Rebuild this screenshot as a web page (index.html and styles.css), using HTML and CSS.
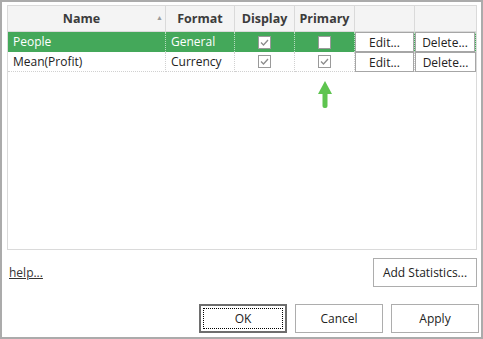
FILE: index.html
```html
<html>
    <head>
        <meta name="viewport" content="width=device-width, initial-scale=1"/>
    <title>Statistics</title>
    <link rel="stylesheet" href="styles.css">
    </head>
    <body>
        <div class="dialog">
        <div class="grid">
            <div class="head">
                <div class="hcell sorted">Name<span class="sort">&#9650;</span></div>
                <div class="hcell">Format</div>
                <div class="hcell">Display</div>
                <div class="hcell">Primary</div>
                <div class="hcell"></div>
                <div class="hcell last"></div>
            </div>
            <div class="row selected">
                <div class="cell">People</div>
                <div class="cell">General</div>
                <div class="cell mid"><span class="check on"><svg width="11" height="11" viewBox="0 0 11 11"><polyline points="2,5.5 4.5,8 9,3" fill="none" stroke="#8c8c8c" stroke-width="1.3"/></svg></span></div>
                <div class="cell mid"><span class="check"></span></div>
                <div class="cell btncell"><button class="mini">Edit...</button></div>
                <div class="cell btncell last"><button class="mini">Delete...</button></div>
            </div>
            <div class="row">
                <div class="cell">Mean(Profit)</div>
                <div class="cell">Currency</div>
                <div class="cell mid"><span class="check on"><svg width="11" height="11" viewBox="0 0 11 11"><polyline points="2,5.5 4.5,8 9,3" fill="none" stroke="#8c8c8c" stroke-width="1.3"/></svg></span></div>
                <div class="cell mid"><span class="check on"><svg width="11" height="11" viewBox="0 0 11 11"><polyline points="2,5.5 4.5,8 9,3" fill="none" stroke="#8c8c8c" stroke-width="1.3"/></svg></span></div>
                <div class="cell btncell"><button class="mini">Edit...</button></div>
                <div class="cell btncell last"><button class="mini">Delete...</button></div>
            </div>
            <svg class="arrow" width="16" height="28" viewBox="0 0 16 28">
                <polygon points="8,0 15,13 1,13" fill="#5ec44f"/>
                <rect x="5.5" y="11" width="5" height="16" rx="2" fill="#5ec44f"/>
            </svg>
        </div>
        <div class="tools">
            <a class="help" href="#">help...</a>
            <button class="btn stats">Add Statistics...</button>
        </div>
        <div class="actions">
            <button class="btn default">OK</button>
            <button class="btn">Cancel</button>
            <button class="btn">Apply</button>
        </div>
        </div>
    </body>
</html>
```
FILE: styles.css
```css
body{
    margin:0;
    width:483px;
    height:339px;
    box-sizing:border-box;
    border:2px solid #ababab;
    background:#fff;
    font-family:"Open Sans", "Liberation Sans", sans-serif;
    font-size:12px;
    color:#222;
    overflow:hidden;
}
.dialog{
    padding:3px 2px 0 5px;
}
.grid{
    position:relative;
    width:468px;
    height:243px;
    border:1px solid #dadada;
}
.head, .row{
    display:grid;
    grid-template-columns:158px 69px 60px 60px 60px 1fr;
}
.hcell{
    position:relative;
    height:25px;
    line-height:25px;
    background:#f4f4f4;
    border-right:1px solid #dadada;
    border-bottom:1px solid #dadada;
    text-align:center;
    font-weight:bold;
    font-size:12.5px;
    color:#3c3c3c;
}
.hcell.sorted{
    padding-right:10px;
}
.hcell.last{
    border-right:none;
}
.sort{
    position:absolute;
    right:2px;
    top:-1px;
    font-size:7px;
    color:#9a9a9a;
    font-weight:normal;
}
.cell{
    height:20px;
    line-height:19px;
    padding-left:5px;
    box-sizing:border-box;
    border-right:1px dotted #d0d0d0;
    border-bottom:1px dotted #d0d0d0;
    white-space:nowrap;
}
.cell.last{
    border-right:none;
}
.selected .cell{
    background:#44a85a;
    color:#fff;
    border-right:1px dotted #b9dcc0;
    border-bottom:none;
}
.selected .cell.last{
    border-right:1px dotted #b9dcc0;
}
.mid{
    padding-left:0;
    display:flex;
    align-items:center;
    justify-content:center;
}
.check{
    display:block;
    width:11px;
    height:11px;
    border:1px solid #9a9a9a;
    background:#fff;
}
.check svg{
    display:block;
}
.btncell{
    padding:0;
}
.mini{
    display:block;
    width:100%;
    height:20px;
    margin:0;
    padding:0;
    border:1px solid #a6a6a6;
    background:#fff;
    font-family:inherit;
    font-size:12px;
    color:#222;
}
.arrow{
    position:absolute;
    left:309px;
    top:75px;
}
.tools{
    display:flex;
    justify-content:space-between;
    align-items:center;
    margin-top:8px;
    width:470px;
}
.help{
    margin-left:2px;
    color:#333;
    text-decoration:underline;
}
.btn{
    width:88px;
    height:29px;
    margin:0;
    border:1px solid #adadad;
    background:#fff;
    font-family:inherit;
    font-size:12px;
    color:#222;
}
.stats{
    width:104px;
}
.actions{
    display:flex;
    justify-content:flex-end;
    gap:8px;
    margin-top:17px;
}
.default{
    border:2px solid #6e6e6e;
    outline:1px dotted #000;
    outline-offset:-5px;
}
```
